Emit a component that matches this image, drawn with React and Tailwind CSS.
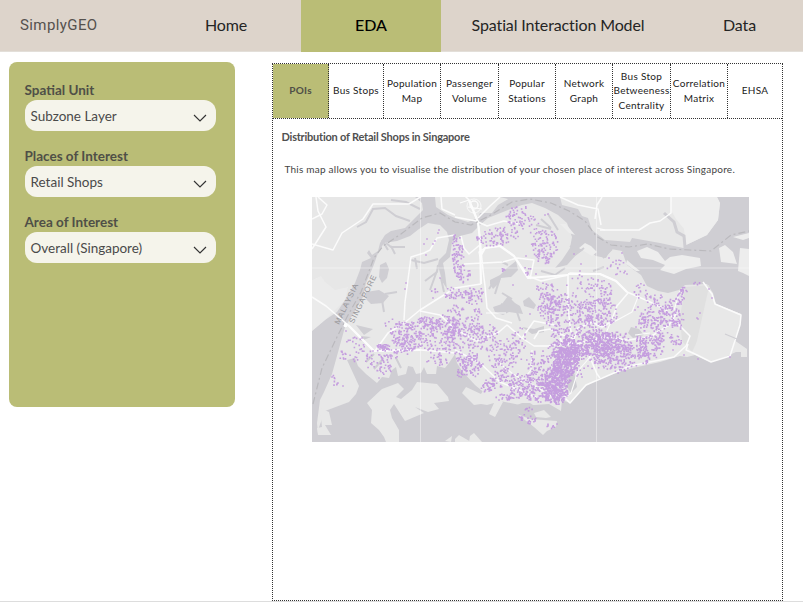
import React from "react";

const NAV = [
  { label: "Home", box: "w-[151px] pl-[1px]", text: "tracking-[-0.1px]" },
  { label: "EDA", box: "w-[140px] bg-[#babd76] font-medium text-black", text: "tracking-[0px]" },
  { label: "Spatial Interaction Model", box: "w-[234px]", text: "tracking-[-0.12px]" },
  { label: "Data", box: "w-[129px]", text: "tracking-[-0.1px]" },
];

const FIELDS = [
  { label: "Spatial Unit", value: "Subzone Layer" },
  { label: "Places of Interest", value: "Retail Shops" },
  { label: "Area of Interest", value: "Overall (Singapore)" },
];

const TABS = [
  { lines: ["POIs"], box: "w-[56px] bg-[#babd76] font-bold text-[#4f4f47] border-r" },
  { lines: ["Bus Stops"], box: "w-[55px] border-r text-[#222]" },
  { lines: ["Population", "Map"], box: "w-[57px] border-r text-[#222]" },
  { lines: ["Passenger", "Volume"], box: "w-[58px] border-r text-[#222]" },
  { lines: ["Popular", "Stations"], box: "w-[57px] border-r text-[#222]" },
  { lines: ["Network", "Graph"], box: "w-[57px] border-r text-[#222]" },
  { lines: ["Bus Stop", "Betweeness", "Centrality"], box: "w-[58px] border-r text-[#222]" },
  { lines: ["Correlation", "Matrix"], box: "w-[57px] border-r text-[#222]" },
  { lines: ["EHSA"], box: "w-[54px] text-[#222]" },
];

// Dot clusters: centre x, centre y, radius x, radius y, rotation in degrees, count
const CLUSTERS = [
  [517, 214, 11, 7, -35, 45], [529, 224, 9, 8, 0, 32], [497, 237, 20, 8, -8, 95],
  [514, 228, 12, 8, -30, 28], [545, 245, 12, 14, 0, 125], [546, 257, 9, 7, 0, 25],
  [458, 257, 5, 21, -4, 120], [464, 274, 7, 8, 0, 28], [452, 293, 8, 5, 0, 35],
  [474, 296, 11, 8, 0, 55], [463, 296, 10, 4, 0, 22], [456, 313, 8, 7, 0, 35], [476, 314, 7, 7, 0, 22],
  [545, 290, 8, 8, 0, 40], [549, 309, 10, 14, 0, 120], [561, 305, 10, 10, 0, 75], [586, 293, 19, 17, 0, 85],
  [597, 312, 19, 14, 0, 160], [594, 329, 13, 13, 0, 105], [578, 319, 13, 13, 0, 70], [605, 294, 6, 13, 0, 42],
  [617, 268, 9, 8, 30, 20], [641, 291, 6, 7, 0, 18], [654, 299, 10, 6, 0, 32],
  [661, 317, 19, 11, 0, 150], [650, 324, 11, 7, 0, 70], [671, 307, 11, 7, -30, 40], [683, 294, 4, 8, 30, 32],
  [678, 322, 6, 5, 0, 18], [676, 340, 6, 5, 0, 28], [659, 339, 5, 8, 0, 30],
  [607, 344, 13, 11, 0, 160], [620, 340, 10, 8, 0, 65], [601, 352, 17, 11, 0, 170], [617, 360, 15, 12, 0, 130],
  [641, 347, 20, 9, -15, 160], [637, 357, 13, 9, 0, 60], [650, 354, 12, 6, -15, 35],
  [593, 344, 19, 9, -20, 190], [578, 346, 15, 13, 0, 135], [569, 353, 10, 12, 10, 250],
  [566, 363, 11, 14, 15, 310], [562, 373, 10, 11, 0, 175], [556, 391, 11, 12, 0, 330], [553, 382, 14, 11, 0, 125],
  [556, 350, 8, 7, 0, 62], [562, 337, 10, 9, 0, 60], [559, 326, 10, 7, 0, 35],
  [544, 369, 16, 9, 0, 100], [539, 387, 17, 11, 0, 120], [521, 384, 13, 10, 0, 105], [531, 396, 16, 7, 8, 65],
  [505, 367, 9, 14, 0, 65], [497, 377, 7, 11, 0, 40], [488, 387, 6, 5, 0, 38], [507, 397, 10, 4, 0, 36],
  [473, 364, 10, 10, 25, 70], [462, 360, 5, 7, 0, 28], [474, 346, 11, 12, 0, 40], [459, 347, 6, 7, 0, 22],
  [469, 327, 13, 9, 0, 75], [457, 330, 8, 9, 0, 60], [483, 332, 13, 8, 0, 55], [489, 343, 12, 8, 0, 30],
  [505, 345, 10, 7, 0, 22], [517, 350, 8, 10, 0, 30], [518, 337, 7, 9, 0, 22], [539, 357, 9, 6, 0, 20],
  [404, 332, 13, 10, -30, 100], [408, 343, 13, 8, 0, 95], [432, 323, 14, 5, 10, 80], [426, 335, 12, 13, 0, 80],
  [446, 325, 9, 10, 0, 70], [449, 337, 6, 7, 0, 38], [440, 349, 10, 8, 0, 32], [437, 361, 12, 4, 0, 24],
  [383, 347, 6, 3, 0, 45], [388, 355, 14, 5, 0, 34], [374, 362, 10, 10, -30, 38], [386, 367, 6, 7, 0, 28],
  [357, 345, 11, 7, 30, 25], [341, 356, 3, 5, 0, 9], [335, 380, 3, 6, 0, 13], [357, 357, 13, 6, 0, 13],
  [393, 324, 8, 6, 0, 13], [528, 419, 8, 4, 15, 28], [550, 427, 4, 3, 0, 9], [530, 409, 5, 2, 0, 10],
  [462, 373, 5, 4, 0, 22], [528, 270, 3, 5, 0, 9], [503, 270, 4, 2, 0, 8], [435, 290, 5, 3, 0, 8],
  [698, 284, 4, 2, 0, 8], [490, 360, 20, 22, 0, 65], [590, 355, 40, 18, -12, 95], [565, 305, 26, 22, 0, 38],
  [430, 340, 38, 16, -10, 65], [530, 375, 25, 22, 0, 60], [660, 328, 25, 20, -20, 55],
];

const SINGLE_DOTS = [
  [427, 239], [424, 244], [439, 230], [438, 233], [435, 241], [433, 244], [426, 255], [406, 283],
  [405, 289], [440, 278], [433, 298], [454, 236], [574, 254], [581, 264], [580, 271], [526, 256],
  [536, 274], [545, 215], [548, 214], [530, 314], [609, 258], [622, 253], [611, 265], [616, 264],
  [627, 274], [709, 289], [712, 298], [700, 313], [697, 318], [698, 319], [684, 355],
  [698, 359], [730, 357], [673, 350], [346, 331], [362, 338], [332, 377], [343, 386], [379, 378],
  [557, 424], [582, 377], [577, 376], [588, 366], [635, 310], [638, 307], [513, 285],
];

function seeded(seed) {
  let s = seed;
  return () => {
    s = (s * 1664525 + 1013904223) % 4294967296;
    return s / 4294967296;
  };
}

function buildDotPath() {
  const rand = seeded(77);
  const parts = [];
  const put = (x, y) => parts.push(`M${x.toFixed(1)} ${y.toFixed(1)}h1.6v1.6h-1.6z`);
  CLUSTERS.forEach(([cx, cy, rx, ry, deg, count]) => {
    const a = (deg * Math.PI) / 180;
    for (let i = 0; i < count * 0.74; i += 1) {
      const t = rand() * Math.PI * 2;
      const r = Math.pow(rand(), 0.56) * 1.12;
      const u = Math.cos(t) * r * rx;
      const v = Math.sin(t) * r * ry;
      put(cx + u * Math.cos(a) - v * Math.sin(a) - 0.8, cy + u * Math.sin(a) + v * Math.cos(a) - 0.8);
    }
  });
  SINGLE_DOTS.forEach(([x, y]) => put(x - 0.8, y - 0.8));
  return parts.join("");
}

const DOTS = buildDotPath();

function SingaporeMap() {
  return (
    <svg className="block h-[245px] w-[437px]" viewBox="312 197 437 245" preserveAspectRatio="none">
      <rect x="312" y="197" width="437" height="245" fill="#cfced3" />
      {/* mainland to the north */}
      <path fill="#e7e7e7" d="M312 197H415L422 203L423 210L415 218L405 228L391 231L385 235L380 243L378 251L372 255L369 250L367 253L371 258L362 262L360 270L355 283L345 300L337 312L325 320L312 331Z" />
      <path fill="#e7e7e7" d="M435 197L436 207L448 215L455 218L468 222L478 218L480 213L492 213L498 205L510 198L513 197ZM560 197L562 205L578 209L582 216L588 218L592 230L605 240L630 242L632 238L660 243L683 248L686 245L707 235L718 220L720 203L717 197Z" />
      <path fill="#eeeeee" d="M671 197L672 212L676 219L684 229L686 245L707 235L718 220L720 203L717 197Z" />
      <path fill="#eeeeee" d="M312 280L321 276L325 282L335 290L348 287L345 300L325 320L312 331Z" opacity=".6" />
      {/* main island */}
      <path fill="#e8e8e8" d="M345 327L355 311L363 297L366 283L373 267L378 253L384 243L397 241L410 236L419 229L428 223L440 225L447 232L449 240L446 253L439 260L438 265L442 281L447 289L445 273L443 263L450 257L452 242L460 236L472 233L480 225L488 218L508 210L522 205L532 203L545 208L558 215L567 223L572 237L570 248L562 260L555 268L567 265L577 254L585 249L596 256L606 258L611 249L622 251L627 265L641 275L647 286L658 291L668 293L679 290L685 285L707 284L713 293L716 304L741 314L740 326L734 340L747 349V357L741 357L741 352L736 352L725 357L718 360L710 362L695 355L687 357L680 356L660 362L633 368L600 378L586 386L570 403L562 400L561 411L549 404L535 405L520 405L500 401L487 395L475 385L462 371L457 363L455 354L449 363L445 368L437 366L436 374L427 374L424 367L421 373L416 374L413 367L408 366L406 374L398 376L396 367L392 370L389 378L382 377L377 383L366 374L358 366L355 358L347 360L359 386L356 394L349 402L325 411L318 430L330 435L318 434L317 423L320 400L324 392L332 374L340 345Z" />
      <path fill="#e8e8e8" d="M320 408L329 412L332 425L325 425L331 435L318 435L317 428L322 427Z" />
      <path fill="#e0e0e0" d="M685 287L709 285L715 304L692 352L682 341L680 317Z" />
      <path fill="#e8e8e8" d="M709 287L716 304L741 314L740 326L727 356L710 361L694 354Z" />
      {/* southern islands */}
      <path fill="#e8e8e8" d="M398 383L382 389L367 403L372 410L371 423L379 430L384 437L386 442H399L399 430L392 418L390 410L394 404L405 421L424 413L415 407L428 412L439 409L434 403L449 401L448 397L437 384L417 382L412 390L401 399L396 397L404 389ZM462 393L466 387L481 394L484 389L490 386L503 402L495 417L489 414L494 403L487 405L481 404L474 405ZM455 439L459 435L471 442H455ZM470 436L474 433L482 442H469ZM517 414L530 419L557 421L556 427L547 431L543 435L534 427ZM534 413L544 410L551 417L546 418L536 417ZM445 441L452 436L451 442Z" />
      {/* northern islands */}
      <path fill="#ededed" d="M637 251L647 247L658 252L665 261L670 257L682 255L700 258L701 266L686 269L674 274L660 270L665 265L653 260L641 258ZM719 248L725 245L733 252L737 264L721 262ZM740 248L749 249V276L743 273L738 271ZM733 237L749 233V238L743 240ZM579 248L585 243L591 246L597 252L592 256ZM627 260L635 267L640 271L636 271L626 264ZM560 224L569 233L575 235L566 224Z" />
      {/* reservoirs */}
      <g fill="#cfced3">
        <path d="M380 265L386 262L389 269L387 278L382 283L379 277ZM366 292L379 290L389 296L383 303L371 304L366 299ZM490 280L500 275L507 268L516 261L518 270L511 277L501 278L499 283L493 289L490 284ZM493 307L502 304L508 296L515 303L520 306L523 314L509 312L503 315L495 312ZM523 301L529 297L536 305L534 309L524 306ZM522 327L534 329L544 326L544 332L532 334ZM631 327L639 329L644 335L633 338L628 333ZM522 403H530L536 407L525 410L517 405ZM569 374L574 371L577 387L571 393L567 387Z" />
        <path d="M356 325L373 329L364 335ZM361 336L371 337L361 341ZM500 197L545 197L540 203L520 202Z" />
      </g>
      {/* rivers */}
      <g fill="none" stroke="#cfced3" strokeWidth="2">
        <path d="M357 227L366 222L373 209L385 208L396 216L410 221M391 200L406 202L420 209M386 243L391 247L405 247M391 246L395 254M382 240L388 250M411 260L424 263L438 259M415 258L417 269M438 265L437 272L425 281M438 268L430 290M441 278L444 292M397 292L385 294M382 300L384 312M541 219L551 228M548 214L558 230M536 225L551 229M570 246L580 252M565 268L555 275L541 271M575 255L584 248M374 369L382 360M366 362L374 354M494 281L489 289M508 265L502 262M500 278L495 294M512 299L502 293M509 308L501 304M516 309L520 321M396 358L401 368" />
        <path d="M664 213L674 222L677 232L684 236L685 247M436 211L445 225" strokeWidth="3" />
        <path d="M603 258L612 249M593 271L604 267" />
      </g>
      {/* roads */}
      <g fill="none" stroke="#fbfbfb" strokeWidth="1.5" strokeLinejoin="round">
        <path d="M312 244L333 250L342 233L363 219L373 204L409 204L422 196M316 197L318 211L326 227L312 249M318 197L327 205L322 214L312 219M312 297L326 306L348 325L374 351" />
        <path d="M374 351L402 350L421 350L455 353M375 351L388 333L403 324L420 310L455 288L481 284M404 320L405 302L411 257L424 253L430 250L437 238L455 235M420 311L440 315L455 329L477 341L499 332L507 325L522 338L534 346L548 346L572 342L589 355L597 374L600 378M455 350L480 363L500 382L521 391L540 399" />
        <path d="M485 286L483 270L480 240L478 222L469 200L464 195M478 218L490 206L500 197M441 197L442 209L455 215M455 217L476 221L487 226L504 221L518 224M481 260L479 252L485 248L500 246L514 256L528 276L541 281L568 275L570 273L600 274L616 281L627 292L648 301L666 310L679 325L690 336L686 346L674 357L655 361L630 366L607 376L586 385L570 403L562 395M464 264L503 262L517 258L534 260L530 279M481 244L469 254L464 248L461 236M485 286L487 308L496 318L512 323" />
        <path d="M628 293L617 306L611 322L602 327L592 322L578 328L572 344L563 345L560 338M568 274L568 307L570 325L573 344M534 339L539 331L550 329L565 336M522 338L534 321L555 325M575 344L606 337L628 340L650 337L669 325L677 312M703 282L712 294L715 304L741 315L740 325L730 356L711 362L695 354L686 350L688 344M600 230H639L650 223L660 221L671 213L671 197M560 197L578 205L598 209L601 225M595 219L597 205L602 197" />
        <path d="M498 362L513 374L535 386L554 398M532 350L531 370L517 387M590 357L578 371L571 393L563 399M604 337L610 324L632 312L638 297M468 207L482 209M469 200L460 203M597 228L605 230M486 313H506M680 291L674 310M635 335L650 333" strokeWidth="1.1" />
      </g>
      <path d="M481 284L480 240L478 222M478 222L469 200M481 255L485 248L500 246L514 256L528 278L568 275M568 274L600 274L616 281L627 292M348 325L374 351L420 350" fill="none" stroke="#fcfcfc" strokeWidth="2.2" strokeLinejoin="round" />
      <circle cx="345.500" cy="325" r="2.200" fill="#fff" />
      <g fill="none" stroke="#fbfbfb" strokeWidth="1.5">
        <ellipse cx="474" cy="205" rx="4" ry="4" />
        <ellipse cx="474" cy="206" rx="7" ry="7" strokeWidth=".8" />
      </g>
      <path d="M420.5 197V442M596.5 197V442M312 268H749" stroke="#fff" strokeOpacity=".42" strokeWidth="1" />
      {/* sea border */}
      <path fill="none" stroke="#bab9bd" strokeWidth="1.2" strokeDasharray="7 3 2 3" d="M313 404L322 368L337 337L347 317L361 292L374 258L383 246L401 234L422 218L440 213L455 222L471 225L489 216L512 202L530 199L551 203L569 211L585 221L596 236L611 245L629 247L648 244L669 249L690 250L711 251L731 235L749 231" />
      <path d="M725 334L737 339" stroke="#cfced3" strokeWidth="1.2" />
      <g fill="#949397" fontFamily="'Liberation Sans', Arial, sans-serif" fontSize="7.8" letterSpacing=".8">
        <text transform="translate(339 325) rotate(-64)">MALAYSIA</text>
        <text transform="translate(353.500 324) rotate(-64)">SINGAPORE</text>
      </g>
      <path d={DOTS} fill="#bf93dd" fillOpacity=".88" />
    </svg>
  );
}

function Select({ label, value }) {
  return (
    <div className="flex flex-col">
      <div className="h-[20px] text-[13.5px] font-bold leading-[20px] text-[#4f4f47]">{label}</div>
      <div className="flex h-[31px] items-center justify-between rounded-[12px] bg-[#f5f4eb] pl-[6px] pr-[9px] text-[13.5px] text-[#4a4a4a]">
        <span className="pt-[2px]">{value}</span>
        <svg className="mt-[4px] h-[8px] w-[14px]" viewBox="0 0 14 8" fill="none" stroke="#333" strokeWidth="1.15">
          <path d="M1 1L7 7L13 1" />
        </svg>
      </div>
    </div>
  );
}

export default function App() {
  return (
    <div className="flex h-[602px] w-[803px] flex-col overflow-hidden border-b border-[#dddddd] bg-white font-['Lato',sans-serif]">
      <header className="flex h-[52px] shrink-0 border-b border-[#e3dfd9] bg-[#ddd4cb] text-[16px] text-[#242424]">
        <div className="flex w-[150px] shrink-0 items-center pl-[20px] font-['Roboto',sans-serif] text-[15px] tracking-[0.4px] text-[#55514e]">SimplyGEO</div>
        {NAV.map((item) => (
          <nav key={item.label} className={`-mb-px flex shrink-0 items-center justify-center pb-[2px] ${item.box}`}>
            <span className={item.text}>{item.label}</span>
          </nav>
        ))}
      </header>
      <main className="flex flex-1 pl-[9px]">
        <aside className="mt-[10px] flex h-[345px] w-[226px] flex-col gap-[15px] rounded-[8px] bg-[#babd76] pl-[15.500px] pr-[19px] pt-[18px]">
          {FIELDS.map((f) => (
            <Select key={f.label} {...f} />
          ))}
        </aside>
        <section className="ml-[37px] mt-[11px] flex h-[538px] w-[511px] flex-col border border-dotted border-[#333]">
          <div className="flex h-[55px] shrink-0 border-b border-dotted border-[#333]">
            {TABS.map((tab) => (
              <div key={tab.lines[0]} className={`flex shrink-0 flex-col items-center justify-center border-dotted border-[#333] pb-[1px] text-[10px] leading-[14.6px] tracking-[0.3px] ${tab.box}`}>
                {tab.lines.map((line) => (
                  <span key={line} className="whitespace-nowrap">{line}</span>
                ))}
              </div>
            ))}
          </div>
          <h1 className="mt-[10px] h-[16px] pl-[8.500px] text-[11px] font-bold leading-[16px] tracking-[-0.22px] text-[#505050]">Distribution of Retail Shops in Singapore</h1>
          <p className="mt-[16px] h-[16px] whitespace-nowrap pl-[11.500px] text-[10px] leading-[16px] tracking-[0.23px] text-[#444]">
            This map allows you to visualise the distribution of your chosen place of interest across Singapore.
          </p>
          <div className="ml-[39px] mt-[20px]">
            <SingaporeMap />
          </div>
        </section>
      </main>
    </div>
  );
}
